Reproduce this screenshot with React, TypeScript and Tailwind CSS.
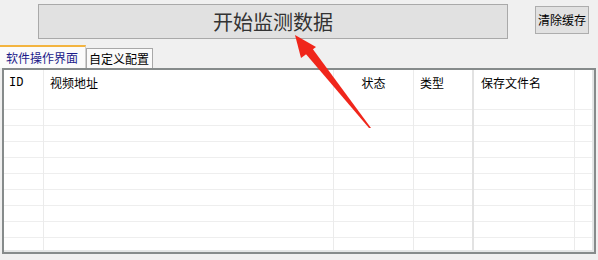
const COLS = [
  { key: 'id', label: 'ID', width: 40, className: 'pl-[5px] font-["Liberation_Mono",monospace]' },
  { key: 'url', label: '视频地址', width: 290, className: 'pl-[6px]' },
  { key: 'status', label: '状态', width: 80, className: 'text-center' },
  { key: 'type', label: '类型', width: 60, className: 'pl-[6px]' },
  { key: 'file', label: '保存文件名', width: 101, className: 'pl-[7px]' },
  { key: 'rest', label: '', width: 17, className: '' },
];

const ROWS = 9;

const Arrow = () => (
  <svg
    className="absolute left-0 top-0 pointer-events-none"
    width={598}
    height={260}
    viewBox="0 0 598 260"
  >
    {/* shaft tapers towards the tail */}
    <polygon points="305,53 312,48 371,128 369,128" fill="#f0261b" />
    {/* head */}
    <polygon points="295,35 316,47 301,58" fill="#f0261b" />
  </svg>
);

export default function App() {
  return (
    <div className='relative w-[598px] h-[260px] overflow-hidden bg-[#f0f0f0] font-["Noto_Sans_CJK_SC",sans-serif] text-[12px] text-black'>
      <div className="flex items-start h-[45px]">
        <button className="ml-[38px] mt-[4px] w-[470px] h-[35px] border border-[#a9a9a9] bg-[#e1e1e1] text-[20px] leading-none text-[#333] flex items-center justify-center">
          开始监测数据
        </button>
        <button className="ml-[27px] mt-[6px] w-[54px] h-[28px] border border-[#adadad] bg-[#e1e1e1] text-[12px] leading-none flex items-center justify-center">
          清除缓存
        </button>
      </div>

      <div className="flex items-end h-[23px]">
        <div className="w-[86px] h-[23px] border-t-2 border-[#f3b440] bg-[#fbfbfb] border-r border-r-[#d0d0d0] text-[#1c1c8a] flex items-center pl-[6px] leading-none">
          软件操作界面
        </div>
        <div className="w-[67px] h-[20px] border border-b-0 border-[#a8a8a8] bg-[#fafafa] flex items-center pl-[2px] leading-none">
          自定义配置
        </div>
      </div>

      <div className="ml-[2px] w-[594px] h-[186px] border-2 border-[#868b8b]">
        <div className="h-full border-r-2 border-b-2 border-[#e4e6e6] bg-white overflow-hidden flex">
          {COLS.map((col, i) => (
            <div
              key={col.key}
              className={`shrink-0 h-full ${i < COLS.length - 1 ? (col.key === 'type' ? 'border-r-2 border-[#e2e2e2]' : 'border-r border-[#ebebeb]') : ''}`}
              style={{ width: col.width }}
            >
              <div className={`h-[39px] pt-[6px] leading-[14px] ${col.className}`}>{col.label}</div>
              {Array.from({ length: ROWS }).map((_, r) => (
                <div key={r} className="h-[16px] border-t border-[#eeeeee]" />
              ))}
            </div>
          ))}
        </div>
      </div>

      <Arrow />
    </div>
  );
}
